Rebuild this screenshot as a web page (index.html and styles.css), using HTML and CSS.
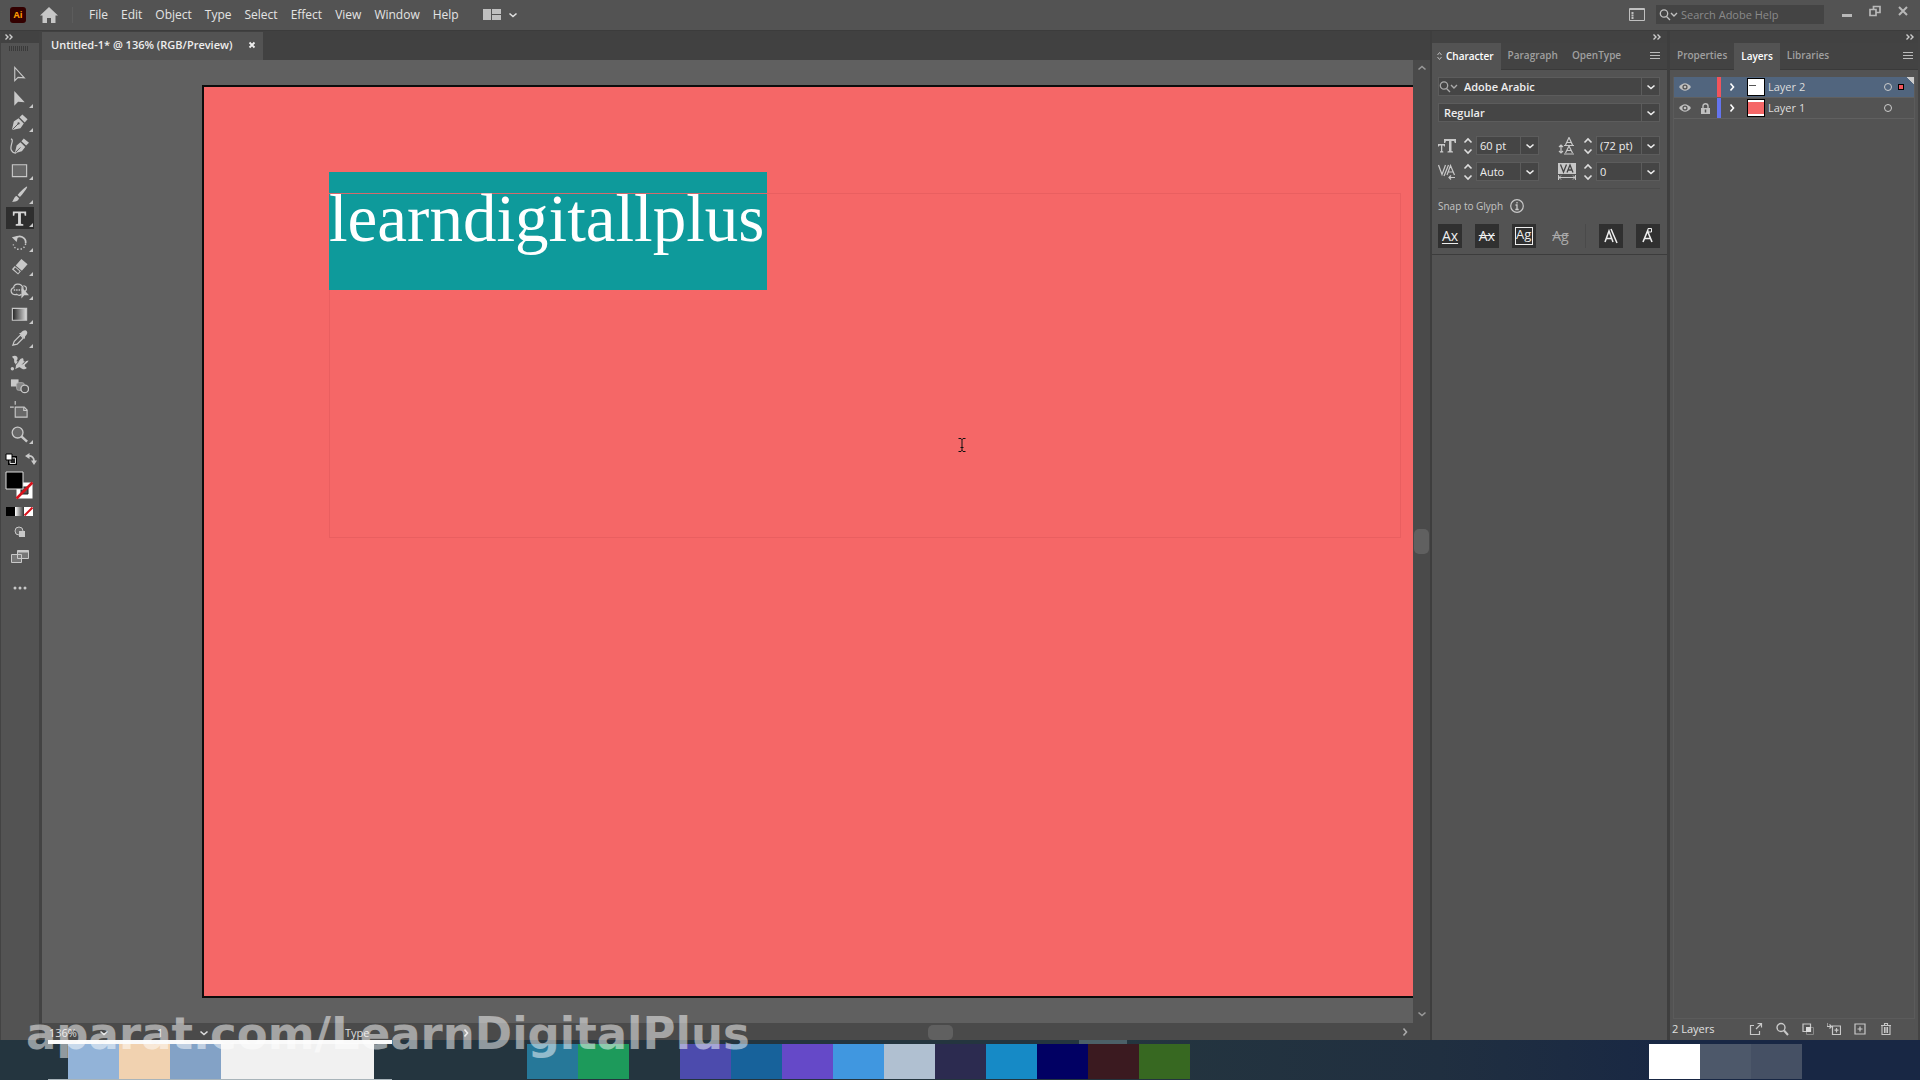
FILE: index.html
```html
<!DOCTYPE html>
<html lang="en">

<head>
    <meta charset="UTF-8">
    <meta name="viewport" content="width=device-width, initial-scale=1.0">
    <title>Untitled-1</title>
    <link rel="stylesheet" href="styles.css">
</head>

<body>
    <!-- shared small icons -->
    <svg class="defs" aria-hidden="true">
        <symbol id="down" viewBox="0 0 10 10"><path d="M1.500 3.500l3.500 3 3.500-3" fill="none" stroke="currentColor" stroke-width="1.600"/></symbol>
        <symbol id="up" viewBox="0 0 10 10"><path d="M1.500 6.500l3.500-3 3.500 3" fill="none" stroke="currentColor" stroke-width="1.600"/></symbol>
        <symbol id="right" viewBox="0 0 10 10"><path d="M3.500 1.500l3 3.500-3 3.500" fill="none" stroke="currentColor" stroke-width="1.600"/></symbol>
        <symbol id="double" viewBox="0 0 10 10"><path d="M1.500 2.500L4 5 1.500 7.500M5.500 2.500L8 5 5.500 7.500" fill="none" stroke="currentColor" stroke-width="1.400"/></symbol>
        <symbol id="lines" viewBox="0 0 10 10"><path d="M0 1.500h10M0 4.500h10M0 7.500h10" stroke="currentColor"/></symbol>
        <symbol id="find" viewBox="0 0 20 12"><circle cx="5" cy="4.500" r="3.700" fill="none" stroke="currentColor" stroke-width="1.300"/><path d="M7.500 7.500l3.500 3.500M12 4l3 3 3-3" fill="none" stroke="currentColor" stroke-width="1.400"/></symbol>
        <symbol id="eye" viewBox="0 0 12 10"><path d="M0 5Q6-2.500 12 5 6 12.500 0 5z" fill="currentColor"/><circle cx="6" cy="5" r="2.600" fill="#535353"/><circle cx="6" cy="5" r="1.300" fill="currentColor"/></symbol>
        <symbol id="step" viewBox="0 0 10 18"><path d="M1.500 5.500L5 2l3.500 3.500M1.500 12.500L5 16l3.500-3.500" fill="none" stroke="currentColor" stroke-width="1.600"/></symbol>
    </svg>

    <header class="menubar">
        <span class="logo">Ai</span>
        <button class="home" aria-label="Home"><svg width="18" height="16" viewBox="0 0 18 16"><path d="M9 0l9 8.500h-2.500V16H11v-5H7v5H2.500V8.500H0z" fill="#c6c6c6"/></svg></button>
        <nav class="menu">
            <a href="#">File</a>
            <a href="#">Edit</a>
            <a href="#">Object</a>
            <a href="#">Type</a>
            <a href="#">Select</a>
            <a href="#">Effect</a>
            <a href="#">View</a>
            <a href="#">Window</a>
            <a href="#">Help</a>
        </nav>
        <button class="arrange" aria-label="Arrange documents">
            <svg width="18" height="11" viewBox="0 0 18 11"><path d="M0 0h8v11H0zM9 0h9v5H9zM9 6h9v5H9z" fill="#c0c0c0"/></svg>
            <svg width="10" height="10"><use href="#down"/></svg>
        </button>
        <button class="workspace" aria-label="Workspace"><svg width="16" height="13" viewBox="0 0 16 13"><path d="M.5.5h15v12H.5z" fill="none" stroke="#c0c0c0"/><path d="M1 1.500h14" stroke="#c0c0c0"/><path d="M3.500 4v7" stroke="#c0c0c0" stroke-width="2" stroke-dasharray="2 .5"/></svg></button>
        <div class="help">
            <svg width="20" height="12"><use href="#find"/></svg>
            <input type="text" aria-label="Search Adobe Help" placeholder="Search Adobe Help">
        </div>
        <div class="winbtns">
            <button aria-label="Minimize"><svg width="12" height="12" viewBox="0 0 12 12"><path d="M1 9h10v3H1z" fill="#b8b8b8"/></svg></button>
            <button aria-label="Restore"><svg width="12" height="12" viewBox="0 0 12 12"><path d="M1 4.500h6v6H1zM4.500 4V1.500h6.500v6H7.500" fill="none" stroke="#b8b8b8" stroke-width="1.700"/></svg></button>
            <button aria-label="Close"><svg width="12" height="12" viewBox="0 0 12 12"><path d="M2 2l8 8M10 2l-8 8" stroke="#b8b8b8" stroke-width="2"/></svg></button>
        </div>
    </header>

    <main class="work">
        <!-- toolbox -->
        <aside class="toolbox">
            <div class="strip"><svg width="10" height="10"><use href="#double"/></svg></div>
            <div class="grip"></div>
            <div class="tools">
                <button aria-label="Selection"><svg viewBox="0 0 20 20"><path d="M5 2.500v14l3.500-3.500 6.500.5z" fill="none" stroke="#c8c8c8" stroke-width="1.200"/></svg></button>
                <button class="more" aria-label="Direct Selection"><svg viewBox="0 0 20 20"><path d="M4.500 2v15.500l4-4 7 .5z" fill="#c8c8c8"/></svg></button>
                <button class="more" aria-label="Pen"><svg viewBox="0 0 20 20"><path d="M2 18l2-9 5-3.500 5.500 5.500L11 16zM10 4.500L13 1.500l5.500 5-3 3.500z" fill="#c8c8c8"/><path d="M2.500 17.500l6-6" stroke="#535353"/><circle cx="9" cy="11" r="1.200" fill="#535353"/></svg></button>
                <button aria-label="Curvature"><svg viewBox="0 0 20 20"><path d="M5 17l2-8 4-3.500 5 5-3.500 4.500zM12 4.500l2.500-3L20 6l-3 3z" fill="#c8c8c8"/><path d="M5.500 16.500l5.500-5.500" stroke="#535353"/><path d="M1 2c4 1-2 8 .500 12 1 2 3 3 5 3" fill="none" stroke="#c8c8c8" stroke-width="1.300"/></svg></button>
                <button class="more" aria-label="Rectangle"><svg viewBox="0 0 20 20"><path d="M2.500 4h15v12.500h-15z" fill="#686868" stroke="#c8c8c8" stroke-width="1.200"/></svg></button>
                <button class="more" aria-label="Paintbrush"><svg viewBox="0 0 20 20"><path d="M18 1.500c1 1-5.500 9-7.500 11L8 10.500c2-3 9-9.500 10-9zM7 11.500l2.500 2.500C8.500 17.500 5 18 2 17.500c2-1 2-5.500 5-6z" fill="#c8c8c8"/></svg></button>
                <button class="more active" aria-label="Type"><svg viewBox="0 0 20 20"><path d="M3 2.500h14V7h-1.500l-.5-2.500h-3.500v11l2.500.5v1.500H6V16l2.500-.5v-11H5L4.500 7H3z" fill="#d6d6d6"/></svg></button>
                <button class="more" aria-label="Rotate"><svg viewBox="0 0 20 20"><path d="M5 6c5-5 12-1 11.500 4.500" fill="none" stroke="#c8c8c8" stroke-width="1.800"/><path d="M2 4.500L8.500 3 7 9.500z" fill="#c8c8c8"/><path d="M16.500 11c-1 8-12 8-13 1" fill="none" stroke="#c8c8c8" stroke-width="1.500" stroke-dasharray="1.500 2"/></svg></button>
                <button class="more" aria-label="Eraser"><svg viewBox="0 0 20 20"><path d="M12 2l6.500 5.500-6 7L6 9zM5 9.500l6.500 5.500-3 3.500L2 13z" fill="#c8c8c8"/><path d="M5.500 11l4.500 4-1.500 2L4 13z" fill="#535353"/></svg></button>
                <button class="more" aria-label="Shape Builder"><svg viewBox="0 0 20 20"><path d="M14 8C12 1 3 3 4 7c-5 1-3 9 3 7 2 1.500 4 1 5 0M14 5c4 0 4 4 2 6" fill="none" stroke="#c8c8c8" stroke-width="1.300"/><path d="M4 9.500h8" stroke="#c8c8c8" stroke-width="1.500" stroke-dasharray="1.500 1"/><path d="M12 6v12.500l3-3.500 5 0z" fill="#c8c8c8"/></svg></button>
                <button class="more" aria-label="Gradient"><svg viewBox="0 0 20 20"><defs><linearGradient id="grad"><stop offset="0" stop-color="#222"/><stop offset="1" stop-color="#ddd"/></linearGradient></defs><path d="M2.500 3.500h15V16h-15z" fill="url(#grad)" stroke="#c8c8c8" stroke-width="1.200"/></svg></button>
                <button aria-label="Eyedropper" class="more"><svg viewBox="0 0 20 20"><path d="M3 17l1.500-4L11 6.500l3 3L7.500 16z" fill="none" stroke="#c8c8c8" stroke-width="1.300"/><path d="M9.500 4.500l2-.5C14 1 16.500 1 17.500 2c1.500 1.500.500 4-1.500 5.500l-.5 3z" fill="#c8c8c8"/></svg></button>
                <button aria-label="Puppet Warp"><svg viewBox="0 0 20 20"><path d="M2 4c3-2 6-1 6 1.500S6 8 7.500 9C10 10 10 5.500 13 5.500c2 0 .5 3 2 3.500 1.500 0 3-1 4.500-1-1 3-4 3.500-4 5.500 0 1.500 2 1 2 2.500-2 2-5 1-6.500-.5C9.500 14 8 16 5.500 17c1-3 1-4.500 0-6C3.500 9.500 5 7 4 6z" fill="#c8c8c8"/><path d="M3 16l6-7M13 12l4-4" stroke="#535353"/><circle cx="2.500" cy="16.500" r="1.800" fill="#c8c8c8"/></svg></button>
                <button aria-label="Blend"><svg viewBox="0 0 20 20"><path d="M1 2.500h8V10H1z" fill="#c8c8c8"/><rect x="7" y="6" width="8" height="8" rx="2" fill="#858585" stroke="#aaa"/><circle cx="15.500" cy="12.500" r="4" fill="#535353" stroke="#c8c8c8" stroke-width="1.400"/></svg></button>
                <button aria-label="Artboard"><svg viewBox="0 0 20 20"><path d="M5.500 6.500h9.500l3 3V17H5.500z" fill="#686868" stroke="#c8c8c8" stroke-width="1.200"/><path d="M5.500 0v4M0 6.500h4M14.500 6.500V10H18" fill="none" stroke="#c8c8c8" stroke-width="1.200"/></svg></button>
                <button class="more" aria-label="Zoom"><svg viewBox="0 0 20 20"><circle cx="8" cy="8" r="5.700" fill="#686868" stroke="#c8c8c8" stroke-width="1.400"/><path d="M12 12l6 5.500" stroke="#c8c8c8" stroke-width="2.600"/></svg></button>
            </div>
            <div class="swap">
                <button aria-label="Default fill and stroke"><svg width="12" height="12" viewBox="0 0 12 12"><path d="M4 4h7v7H4z" fill="#222" stroke="#000" stroke-width="2"/><path d="M5 5h5.500v5.500H5z" fill="none" stroke="#ddd"/><path d="M1 1h6v6H1z" fill="#fff" stroke="#000"/></svg></button>
                <button aria-label="Swap fill and stroke"><svg width="12" height="12" viewBox="0 0 12 12"><path d="M3 3c4-.5 6 2 6 5" fill="none" stroke="#c8c8c8" stroke-width="1.800"/><path d="M4.500 0v6L0 3zM6 7.500h6L9 12z" fill="#c8c8c8"/></svg></button>
            </div>
            <svg class="fill" width="30" height="30" viewBox="0 0 30 30">
                <path d="M11 11h17v17H11z" fill="#fff" stroke="#555"/>
                <path d="M16 16h7v7h-7z" fill="#535353" stroke="#222"/>
                <path d="M11.500 27.500l16-16" stroke="#d8121c" stroke-width="2.500"/>
                <path d="M1 1h17v17H1z" fill="#000" stroke="#ddd"/>
            </svg>
            <svg class="modes" width="27" height="9" viewBox="0 0 27 9">
                <defs><linearGradient id="mono"><stop offset="0" stop-color="#fff"/><stop offset="1" stop-color="#333"/></linearGradient></defs>
                <path d="M0 0h9v9H0z"/>
                <path d="M9 0h9v9H9z" fill="url(#mono)"/>
                <path d="M18 0h9v9h-9z" fill="#fff"/>
                <path d="M18.500 8.500l8-8" stroke="#d8121c" stroke-width="2"/>
            </svg>
            <button class="foot" aria-label="Drawing mode"><svg width="12" height="12" viewBox="0 0 12 12"><circle cx="5" cy="5" r="4" fill="#686868" stroke="#c8c8c8"/><path d="M5 5h6v6H5z" fill="#c8c8c8"/></svg></button>
            <button class="foot" aria-label="Screen mode"><svg width="18" height="13" viewBox="0 0 18 13"><path d="M.5 4.500h10v8H.5zM6.500.5h11v8h-11z" fill="#777" stroke="#c8c8c8"/><path d="M6.500 1.500h11" stroke="#c8c8c8" stroke-width="2"/></svg></button>
            <button class="foot dots" aria-label="Edit toolbar"><svg width="14" height="4" viewBox="0 0 14 4"><circle cx="2" cy="2" r="1.500"/><circle cx="7" cy="2" r="1.500"/><circle cx="12" cy="2" r="1.500"/></svg></button>
        </aside>

        <!-- document -->
        <section class="doc">
            <div class="doctabs">
                <div class="doctab">Untitled-1* @ 136% (RGB/Preview)
                    <button aria-label="Close document"><svg width="8" height="8" viewBox="0 0 8 8"><path d="M1.500 1.500l5 5M6.500 1.500l-5 5" stroke="#eee" stroke-width="1.800"/></svg></button>
                </div>
            </div>
            <div class="view">
                <div class="canvas">
                    <div class="artboard">
                        <div class="frame">
                            <span class="picked">learndigitallplus</span>
                        </div>
                    </div>
                    <svg class="ibeam" width="8" height="14" viewBox="0 0 8 14"><path d="M.5.5h2.500l1 1 1-1h2.500M4 1v12M.5 13.500h2.500l1-1 1 1h2.500M2.500 9.500h3" fill="none" stroke="#111"/></svg>
                </div>
                <div class="vscroll">
                    <svg width="10" height="10"><use href="#up"/></svg>
                    <span class="thumb"></span>
                    <svg width="10" height="10"><use href="#down"/></svg>
                </div>
            </div>
            <div class="status">
                <span class="zoom">136%</span>
                <svg width="10" height="10"><use href="#down"/></svg>
                <span class="page">1</span>
                <svg width="10" height="10"><use href="#down"/></svg>
                <span class="tool">Type</span>
                <svg width="10" height="10"><use href="#right"/></svg>
                <div class="hscroll">
                    <span class="thumb"></span>
                    <svg width="10" height="10"><use href="#right"/></svg>
                </div>
            </div>
        </section>

        <!-- character panel -->
        <aside class="panel character">
            <div class="strip"><svg width="10" height="10"><use href="#double"/></svg></div>
            <div class="tabs">
                <button class="tab on"><svg width="5" height="8" viewBox="0 0 5 8"><path d="M.5 3l2-2.500 2 2.500M.5 5l2 2.500 2-2.500" fill="none" stroke="#bbb"/></svg>Character</button>
                <button class="tab">Paragraph</button>
                <button class="tab">OpenType</button>
                <button class="lines" aria-label="Panel menu"><svg width="10" height="10"><use href="#lines"/></svg></button>
            </div>
            <div class="fields">
                <div class="field family">
                    <svg class="find" width="20" height="12"><use href="#find"/></svg>
                    <input type="text" aria-label="Font family" value="Adobe Arabic">
                    <button aria-label="Show fonts"><svg width="10" height="10"><use href="#down"/></svg></button>
                </div>
                <div class="field style">
                    <input type="text" aria-label="Font style" value="Regular">
                    <button aria-label="Show styles"><svg width="10" height="10"><use href="#down"/></svg></button>
                </div>
                <div class="pairs">
                    <div class="pair">
                        <label for="size"><svg width="18" height="16" viewBox="0 0 18 16"><path d="M6 1h12v4h-1.200L16 3h-2.500v10l1.500.5v1H9.500v-1L11 13V3H8l-.8 2H6zM0 6h7v2.500h-.8L5.500 7.500H4.300V13l1 .500v1H2v-1l1-.5V7.500H1.500L.8 8.500H0z" fill="#c8c8c8"/></svg></label>
                        <svg class="step" width="10" height="18"><use href="#step"/></svg>
                        <div class="field"><input id="size" type="text" value="60 pt"><button aria-label="Sizes"><svg width="10" height="10"><use href="#down"/></svg></button></div>
                    </div>
                    <div class="pair">
                        <label for="leading"><svg width="18" height="18" viewBox="0 0 18 18"><path d="M7.500 8L11 .5 14.500 8M8.500 5.500h5M7.500 16L11 9l3.500 7M8.500 13.500h5M6 8.500h10M6 17h10M3 8v8M1 10l2-2 2 2M1 14l2 2 2-2" fill="none" stroke="#c8c8c8" stroke-width="1.200"/></svg></label>
                        <svg class="step" width="10" height="18"><use href="#step"/></svg>
                        <div class="field"><input id="leading" type="text" value="(72 pt)"><button aria-label="Leading values"><svg width="10" height="10"><use href="#down"/></svg></button></div>
                    </div>
                    <div class="pair">
                        <label for="kerning"><svg width="18" height="16" viewBox="0 0 18 16"><path d="M.5 1l3.500 9.500L7.500 1M6 12L10.500 1M9 11l3.500-9.500L16.500 11M10 8h5M17 13.500h-6M13 11.500l-2 2 2 2" fill="none" stroke="#c8c8c8" stroke-width="1.200"/></svg></label>
                        <svg class="step" width="10" height="18"><use href="#step"/></svg>
                        <div class="field"><input id="kerning" type="text" value="Auto"><button aria-label="Kerning values"><svg width="10" height="10"><use href="#down"/></svg></button></div>
                    </div>
                    <div class="pair">
                        <label for="tracking"><svg width="18" height="17" viewBox="0 0 18 17"><path d="M0 0h18v11H0z" fill="#c8c8c8"/><path d="M2.500 1.500L5.500 9l3-7.500M9 9.500L12 2l3 7.500M10 7h4" fill="none" stroke="#444" stroke-width="1.300"/><path d="M1 14.500h16M3 12.500l-2 2 2 2M15 12.500l2 2-2 2M.5 12v5M17.500 12v5" fill="none" stroke="#c8c8c8"/></svg></label>
                        <svg class="step" width="10" height="18"><use href="#step"/></svg>
                        <div class="field"><input id="tracking" type="text" value="0"><button aria-label="Tracking values"><svg width="10" height="10"><use href="#down"/></svg></button></div>
                    </div>
                </div>
                <div class="snap">Snap to Glyph
                    <svg width="14" height="14" viewBox="0 0 14 14"><circle cx="7" cy="7" r="6.300" fill="none" stroke="#c8c8c8" stroke-width="1.200"/><path d="M7 3v1.600M5.500 6H7v4.500M5.300 10.500h3.400" fill="none" stroke="#c8c8c8" stroke-width="1.300"/></svg>
                </div>
                <div class="glyphs">
                    <button aria-label="Baseline" class="base">Ax</button>
                    <button aria-label="x-height" class="xheight">Ax</button>
                    <button aria-label="Glyph bounds" class="bounds"><span>Ag</span></button>
                    <button aria-label="Proximity guides" class="off">Ag</button>
                    <i></i>
                    <button aria-label="Angular guides"><svg width="16" height="18" viewBox="0 0 16 18"><path d="M2 15L6 4l4 11M3.500 11.500h5M8 2l6 14" fill="none" stroke="#eee" stroke-width="1.500"/></svg></button>
                    <button aria-label="Anchor point"><svg width="16" height="18" viewBox="0 0 16 18"><path d="M3 15L7.500 4 12 15M4.500 11.500h6" fill="none" stroke="#eee" stroke-width="1.600"/><path d="M8 1.500h3.500V5H8z" fill="#303030" stroke="#eee"/></svg></button>
                </div>
            </div>
        </aside>

        <!-- layers panel -->
        <aside class="panel layers">
            <div class="strip"><svg width="10" height="10"><use href="#double"/></svg></div>
            <div class="tabs">
                <button class="tab">Properties</button>
                <button class="tab on">Layers</button>
                <button class="tab">Libraries</button>
                <button class="lines" aria-label="Panel menu"><svg width="10" height="10"><use href="#lines"/></svg></button>
            </div>
            <ul class="list">
                <li class="layer current">
                    <svg class="eye" width="12" height="10"><use href="#eye"/></svg>
                    <span class="lock"></span>
                    <span class="bar red"></span>
                    <svg class="open" width="10" height="10"><use href="#right"/></svg>
                    <span class="pic"></span>
                    <span class="name">Layer 2</span>
                    <span class="ring"></span>
                    <span class="art"></span>
                </li>
                <li class="layer">
                    <svg class="eye" width="12" height="10"><use href="#eye"/></svg>
                    <span class="lock"><svg width="9" height="11" viewBox="0 0 9 11"><path d="M2 5V3c0-3 5-3 5 0v2" fill="none" stroke="#c0c0c0" stroke-width="1.400"/><path d="M0 5h9v6H0z" fill="#c0c0c0"/><path d="M4.500 6.500v3" stroke="#535353" stroke-width="1.500"/></svg></span>
                    <span class="bar blue"></span>
                    <svg class="open" width="10" height="10"><use href="#right"/></svg>
                    <span class="pic coral"></span>
                    <span class="name">Layer 1</span>
                    <span class="ring"></span>
                    <span class="art none"></span>
                </li>
            </ul>
            <footer class="actions">
                <span>2 Layers</span>
                <button aria-label="Collect for export"><svg viewBox="0 0 14 14"><path d="M5 3.500H1.500v9h9V9M7 7l5-5M8.500 1.500h4v4" fill="none" stroke="#c8c8c8" stroke-width="1.200"/></svg></button>
                <button aria-label="Locate object"><svg viewBox="0 0 14 14"><circle cx="6" cy="5.500" r="4" fill="none" stroke="#c8c8c8" stroke-width="1.400"/><path d="M9 8.500l4 4.500" stroke="#c8c8c8" stroke-width="2"/></svg></button>
                <button aria-label="Clipping mask"><svg viewBox="0 0 14 14"><path d="M5.500 5.500h7v7h-7z" fill="none" stroke="#888"/><path d="M2 2h7.500v7.500H2z" fill="none" stroke="#c8c8c8" stroke-width="1.200"/><path d="M5 5h5v5H5z" fill="#ddd"/></svg></button>
                <button aria-label="New sublayer"><svg viewBox="0 0 14 14"><path d="M5.500 4h8v8.500h-8zM9.500 6v4.500M7.500 8.200h4M0 1v3.500h4M2.500 2.500l2 2-2 2" fill="none" stroke="#c8c8c8" stroke-width="1.200"/></svg></button>
                <button aria-label="New layer"><svg viewBox="0 0 14 14"><path d="M2 2h10v10H2zM7 4.500v5M4.500 7h5" fill="none" stroke="#c8c8c8" stroke-width="1.200"/></svg></button>
                <button aria-label="Delete"><svg viewBox="0 0 14 14"><path d="M3 4v8.500h8V4M2 3.500h10M5.500 3V1.500h3V3M5.500 5v6M7 5v6M8.500 5v6" fill="none" stroke="#c8c8c8" stroke-width="1.100"/></svg></button>
            </footer>
        </aside>
    </main>

    <!-- one block for each icon on the taskbar -->
    <div class="taskbar">
        <div class="pinned">
            <span class="sky"></span><span class="sand"></span><span class="steel"></span>
            <span class="paper"></span><span class="paper"></span><span class="paper"></span>
            <span></span><span></span><span></span>
            <span class="teal"></span><span class="green"></span><span></span>
            <span class="indigo"></span><span class="ocean"></span><span class="violet"></span>
            <span class="azure"></span><span class="mist"></span><span class="plum"></span>
            <span class="cyan"></span><span class="navy"></span><span class="wine"></span><span class="olive"></span>
        </div>
        <div class="tray"><span class="white"></span><span class="slate"></span><span class="slate2"></span></div>
    </div>
    <div class="watermark">aparat.com/LearnDigitalPlus</div>
</body>

</html>
```
FILE: styles.css
```css
* {
    margin: 0;
    padding: 0;
    box-sizing: border-box;
}

body {
    display: flex;
    flex-direction: column;
    height: 100vh;
    min-height: 700px;
    overflow: hidden;
    background-color: #535353;
    color: #e0e0e0;
    font: 11px/16px "Open Sans", "Noto Sans", sans-serif;
}

button,
input {
    border: 0;
    background: none;
    color: inherit;
    font: inherit;
}

input {
    min-width: 0;
    outline: none;
}

button {
    display: flex;
    align-items: center;
    justify-content: center;
}

svg {
    display: block;
    flex: none;
}

ul {
    list-style: none;
}

.defs {
    position: absolute;
    width: 0;
    height: 0;
}
/* menu bar */

.menubar {
    display: flex;
    align-items: center;
    flex: none;
    height: 31px;
    padding: 0 3px 1px 10px;
    border-bottom: 1px solid #3c3c3c;
}

.logo {
    width: 16px;
    height: 16px;
    border-radius: 3px;
    background-color: #300;
    color: #ff9a00;
    font-size: 9px;
    font-weight: 700;
    line-height: 15px;
    text-align: center;
}

.home {
    margin-left: 14px;
}

.menu {
    display: flex;
    gap: 13px;
    margin-left: 14px;
    padding-left: 16px;
    border-left: 1px solid #5c5c5c;
    font-size: 12px;
}

.menu a {
    color: #e4e4e4;
    text-decoration: none;
}

.arrange {
    gap: 7px;
    margin-left: 24px;
}

.workspace {
    margin-left: auto;
    margin-right: 11px;
}

.help {
    display: flex;
    align-items: center;
    width: 168px;
    height: 19px;
    padding-left: 3px;
    background-color: #444;
    color: #c0c0c0;
}

.help input {
    width: 130px;
    margin-left: 2px;
    font-size: 11px;
}

.help input::placeholder {
    color: #8a8a8a;
}

.winbtns {
    display: flex;
    margin-left: 9px;
    padding-bottom: 8px;
}

.winbtns button {
    width: 28px;
    height: 18px;
}
/* everything between menu bar and taskbar */

.work {
    display: flex;
    flex: 1;
    min-height: 0;
}

.strip {
    display: flex;
    align-items: center;
    flex: none;
    height: 12px;
    background-color: #424242;
    color: #ccc;
}

.toolbox {
    display: flex;
    flex-direction: column;
    flex: none;
    width: 42px;
    border-right: 3px solid #434343;
    border-left: 1px solid #434343;
}

.toolbox .strip {
    padding-left: 3px;
}

.grip {
    width: 20px;
    height: 5px;
    margin: 3px auto 11px 8px;
    background: repeating-linear-gradient(90deg, #3a3a3a 0 1px, #535353 1px 2px);
}

.tools {
    display: flex;
    flex-direction: column;
    margin-left: 5px;
}

.tools button {
    position: relative;
    width: 28px;
    height: 24px;
    padding-right: 1px;
}

.tools svg {
    width: 19px;
    height: 19px;
}

.tools .active {
    border-top: 1px solid #535353;
    border-bottom: 1px solid #535353;
    background-color: #2e2e2e;
}
/* corner mark of a tool that has a flyout */

.more::after {
    content: "";
    position: absolute;
    right: 1px;
    bottom: 2px;
    border: 2px solid #c8c8c8;
    border-top-color: transparent;
    border-left-color: transparent;
}

.swap {
    display: flex;
    justify-content: space-between;
    margin: 7px 2px 4px 4px;
}

.fill {
    margin-left: 4px;
    margin-top: 2px;
}

.modes {
    margin: 6px 0 4px 5px;
}

.foot {
    height: 24px;
    padding-right: 1px;
}

.dots {
    height: 40px;
    fill: #c8c8c8;
}
/* document window */

.doc {
    display: flex;
    flex-direction: column;
    flex: 1;
    min-width: 0;
}

.doctabs {
    display: flex;
    flex: none;
    height: 29px;
    background-color: #414141;
}

.doctab {
    display: flex;
    align-items: center;
    gap: 16px;
    padding: 0 7px 2px 9px;
    border-top: 1px solid #414141;
    background-color: #535353;
    color: #eee;
    font-weight: 600;
}

.view {
    display: flex;
    flex: 1;
    min-height: 0;
}

.canvas {
    position: relative;
    flex: 1;
    overflow: hidden;
    background-color: #606060;
}
/* the artboard runs on past the right edge of the view */

.artboard {
    position: absolute;
    top: 25px;
    right: 0;
    bottom: 25px;
    left: 160px;
    border: 2px solid #0c0c0c;
    border-right: 0;
    background-color: #f56767;
}

.frame {
    position: absolute;
    top: 106px;
    left: 125px;
    right: 12px;
    height: 345px;
    border: 1px solid #e95f60;
}

.picked {
    position: absolute;
    top: -22px;
    left: -1px;
    height: 118px;
    background: linear-gradient(#d36a6c, #d36a6c) 0 21px / 100% 1px no-repeat #0e9a9b;
    color: #fff;
    font: 67px/92px "Liberation Serif", serif;
    padding-right: 3px;
}

.ibeam {
    position: absolute;
    top: 378px;
    left: 916px;
}

.vscroll {
    display: flex;
    flex-direction: column;
    align-items: center;
    justify-content: space-between;
    width: 17px;
    padding: 3px 0 4px;
    background-color: #4a4a4a;
    color: #999;
}

.thumb {
    width: 15px;
    height: 25px;
    border-radius: 5px;
    background-color: #606060;
}

.status {
    display: flex;
    align-items: center;
    flex: none;
    height: 17px;
    padding: 3px 0 0 7px;
    background-color: #4a4a4a;
    color: #ddd;
}

.zoom {
    width: 50px;
}

.page {
    width: 90px;
    padding-left: 48px;
}

.tool {
    width: 252px;
    padding-left: 136px;
}

.hscroll {
    display: flex;
    align-items: center;
    flex: 1;
    justify-content: space-between;
    padding: 0 20px 2px 10px;
    color: #aaa;
}

.hscroll .thumb {
    width: 25px;
    height: 15px;
    margin-left: auto;
    margin-right: auto;
}
/* side panels */

.panel {
    display: flex;
    flex-direction: column;
    flex: none;
    border-left: 2px solid #3e3e3e;
}

.character {
    width: 237px;
}

.layers {
    width: 253px;
    border-left-width: 3px;
    border-right: 2px solid #444;
}

.panel .strip {
    justify-content: flex-end;
    padding-right: 5px;
}

.layers .strip {
    padding-right: 3px;
}

.tabs {
    display: flex;
    flex: none;
    height: 27px;
    border-bottom: 1px solid #3a3a3a;
    background-color: #434343;
}

.tab {
    padding: 0 7px 2px;
    color: #a0a0a0;
    font-size: 10px;
    font-weight: 600;
}

.tab.on {
    gap: 4px;
    height: 27px;
    background-color: #535353;
    color: #fff;
}

.character .tab.on {
    padding-left: 5px;
}

.lines {
    margin-left: auto;
    padding-right: 7px;
    color: #bbb;
}

.layers .lines {
    padding-right: 5px;
}

.fields {
    padding: 7px 7px 6px 6px;
    border-bottom: 1px solid #3c3c3c;
}

.field {
    display: flex;
    align-items: center;
    flex: 1;
    height: 19px;
    border: 1px solid #5c5c5c;
    background-color: #454545;
    color: #eee;
}

.field input {
    flex: 1;
    width: 30px;
    padding-left: 3px;
}

.field button {
    flex: none;
    width: 18px;
    height: 17px;
    border-left: 1px solid #5c5c5c;
}

.family input,
.style input {
    padding-left: 5px;
    font-weight: 600;
}

.style {
    margin-top: 7px;
}

.find {
    color: #aaa;
}

.pairs {
    display: grid;
    grid-template-columns: 101px 102px;
    justify-content: space-between;
    row-gap: 7px;
    margin-top: 14px;
    padding-bottom: 7px;
    border-bottom: 1px solid #4b4b4b;
}

.pair {
    display: flex;
    align-items: center;
}

.step {
    margin: 0 3px 0 7px;
    color: #ddd;
}

.snap {
    display: flex;
    align-items: center;
    gap: 10px;
    margin: 9px 0 10px;
    color: #c4c4c4;
    font-size: 10px;
}

.snap svg {
    margin-left: -3px;
}

.glyphs {
    display: flex;
    justify-content: space-between;
}

.glyphs button {
    width: 24px;
    height: 24px;
    background-color: #303030;
    color: #eee;
    font-size: 14px;
    line-height: 16px;
}

.glyphs i {
    width: 1px;
    background-color: #4a4a4a;
}

.glyphs .base {
    text-decoration: underline;
    text-underline-offset: 2px;
}

.glyphs .xheight {
    text-decoration: line-through;
}

.bounds span {
    width: 18px;
    height: 18px;
    border: 1px solid #eee;
    line-height: 13px;
    font-size: 13px;
}

.glyphs .off {
    background: none;
    color: #aaa;
    text-decoration: line-through;
}
/* layers */

.list {
    flex: 1;
    margin: 7px 3px 0 3px;
    border: 1px solid #5b5b5b;
    border-top: 0;
}

.layer {
    display: flex;
    align-items: center;
    height: 21px;
    padding-left: 5px;
    border-bottom: 1px solid #606060;
    color: #ddd;
}

.current {
    background: linear-gradient(225deg, #ccc 5px, #51657e 5px);
}

.eye {
    color: #c0c0c0;
}

.lock {
    width: 9px;
    margin-left: 10px;
}

.bar {
    width: 4px;
    height: 20px;
    margin-left: 7px;
}

.red {
    background-color: #f2545b;
}

.blue {
    background-color: #6474ee;
}

.open {
    margin: 0 10px 0 6px;
    color: #fff;
}

.pic {
    width: 18px;
    height: 18px;
    border: 1px solid #000;
    background: linear-gradient(#555, #555) 1px 6px / 7px 1px no-repeat #fff;
}

.coral {
    background: linear-gradient(#fff 2px, #f56767 2px 14px, #fff 14px);
}

.name {
    margin-left: 3px;
}

.ring {
    width: 8px;
    height: 8px;
    margin-left: auto;
    border: 1px solid #ccc;
    border-radius: 50%;
}

.art {
    width: 6px;
    height: 6px;
    margin: 0 10px 0 6px;
    border: 1px solid #000;
    background-color: #f2545b;
}

.none {
    visibility: hidden;
}

.actions {
    display: flex;
    align-items: center;
    flex: none;
    height: 21px;
    padding: 0 19px 2px 2px;
    font-size: 11px;
}

.actions span {
    margin-right: auto;
}

.actions button {
    width: 26px;
    height: 20px;
}

.actions svg {
    width: 14px;
    height: 14px;
}
/* taskbar */

.taskbar {
    display: flex;
    justify-content: space-between;
    position: relative;
    flex: none;
    height: 40px;
    padding: 4px 118px 1px 68px;
    background: linear-gradient(#4c6068, #4c6068) 1079px 0 / 48px 4px no-repeat, linear-gradient(90deg, #24353f 0 58%, #202f40 75%, #182744 88%);
}

.pinned,
.tray {
    display: flex;
}

.taskbar span {
    width: 51px;
}
/* light strip over and under the first blocks */

.taskbar::before {
    content: "";
    position: absolute;
    top: 0;
    left: 48px;
    width: 344px;
    height: 4px;
    background-color: #fafafa;
}

.taskbar::after {
    content: "";
    position: absolute;
    bottom: 0;
    left: 48px;
    width: 344px;
    height: 1px;
    background-color: #a8b4ba;
}

.sky { background-color: #92b3d8; }
.sand { background-color: #f1d2b0; }
.steel { background-color: #83a2c6; }
.paper { background-color: #f1f1f1; }
.teal { background-color: #267899; }
.green { background-color: #1d9a5b; }
.indigo { background-color: #4c4bad; }
.ocean { background-color: #17629b; }
.violet { background-color: #6549c8; }
.azure { background-color: #4097e0; }
.mist { background-color: #b0c0d1; }
.plum { background-color: #2c2b50; }
.cyan { background-color: #168ac6; }
.navy { background-color: #010063; }
.wine { background-color: #3b1a20; }
.olive { background-color: #376821; }
.white { background-color: #fff; }
.slate { background-color: #4d586a; }
.slate2 { background-color: #455064; }

.watermark {
    position: absolute;
    bottom: 20px;
    left: 26px;
    color: rgba(255, 255, 255, .5);
    font: bold 45px/52px "DejaVu Sans", sans-serif;
    pointer-events: none;
}
```
